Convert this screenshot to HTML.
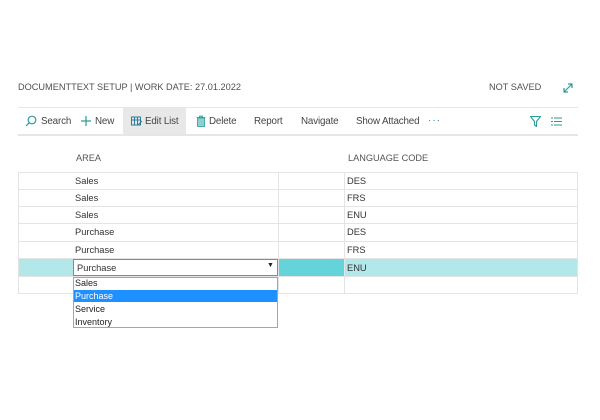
<!DOCTYPE html>
<html><head><style>
*{margin:0;padding:0;box-sizing:border-box}
body{width:600px;height:420px;background:#fff;font-family:"Liberation Sans",sans-serif;position:relative;overflow:hidden;color:#333}
.a{position:absolute;white-space:nowrap}
.t{font-size:9.8px;color:#444;letter-spacing:-0.15px}
.hl{position:absolute;height:1px;background:#e4e4e4}
.vl{position:absolute;width:1px;background:#e4e4e4}
.c{font-size:9.3px;color:#333}
</style></head><body>
<div class="a" style="left:18px;top:82px;font-size:9.2px;color:#505050">DOCUMENTTEXT SETUP | WORK DATE: 27.01.2022</div>
<div class="a" style="left:489px;top:82px;font-size:9.2px;color:#505050">NOT SAVED</div>
<svg class="a" style="left:562px;top:82px" width="12" height="12" viewBox="0 0 12 12" fill="none" stroke="#2a9d9a" stroke-width="1.2"><path d="M2 10L10 2M6 2h4v4M2 6v4h4"/></svg>
<div class="hl" style="left:18px;width:560px;top:107px;background:#e6e6e6"></div>
<div class="hl" style="left:18px;width:560px;top:134px;height:2px;background:#e6e6e6"></div>
<div class="a" style="left:123px;top:108px;width:63px;height:26px;background:#e8e8e8"></div>
<svg class="a" style="left:25px;top:115px" width="12" height="12" viewBox="0 0 12 12" fill="none" stroke="#2a9d9a" stroke-width="1.2"><circle cx="7" cy="5" r="3.8"/><path d="M4.3 7.7L1 11"/></svg>
<div class="a t" style="left:41px;top:116px">Search</div>
<svg class="a" style="left:80px;top:115px" width="12" height="12" viewBox="0 0 12 12" stroke="#2a9d9a" stroke-width="1.2"><path d="M6 1v10M1 6h10"/></svg>
<div class="a t" style="left:95px;top:116px">New</div>
<svg class="a" style="left:131px;top:116px" width="12" height="11" viewBox="0 0 12 11" fill="none" stroke="#2a7d9a" stroke-width="1"><rect x="0.5" y="1" width="9" height="8"/><path d="M0.5 4h9M3.5 1v8M6.5 1v8M7 9l4-4"/></svg>
<div class="a t" style="left:145px;top:116px">Edit List</div>
<svg class="a" style="left:196px;top:115px" width="10" height="12" viewBox="0 0 10 12" fill="#8fd0cf" stroke="#2a9d9a" stroke-width="0.8"><rect x="1.5" y="3" width="7" height="8.5"/><path d="M0.5 2.5h9M3.5 2.5V1h3v1.5"/></svg>
<div class="a t" style="left:209px;top:116px">Delete</div>
<div class="a t" style="left:254px;top:116px">Report</div>
<div class="a t" style="left:301px;top:116px">Navigate</div>
<div class="a t" style="left:356px;top:116px">Show Attached</div>
<div class="a" style="left:428px;top:115px;font-size:10px;color:#2a7d9a;letter-spacing:1px">···</div>
<svg class="a" style="left:530px;top:116px" width="11" height="11" viewBox="0 0 11 11" fill="none" stroke="#2a9d9a" stroke-width="1.1"><path d="M0.5 0.5h10L6.5 5.5v5l-2-1.5V5.5z"/></svg>
<svg class="a" style="left:551px;top:117px" width="11" height="9" viewBox="0 0 11 9" stroke="#2a9d9a" stroke-width="1"><path d="M0 1h2M3 1h8M0 4.5h2M3 4.5h8M0 8h2M3 8h8"/></svg>
<div class="a" style="left:76px;top:153px;font-size:9.2px;color:#555">AREA</div>
<div class="a" style="left:348px;top:153px;font-size:9.2px;color:#555">LANGUAGE CODE</div>
<div class="a" style="left:18px;top:259px;width:560px;height:17px;background:#b3e8ea"></div>
<div class="a" style="left:278px;top:259px;width:66px;height:17px;background:#64d4da"></div>
<div class="hl" style="left:18px;width:560px;top:172px"></div>
<div class="hl" style="left:18px;width:560px;top:189px"></div>
<div class="hl" style="left:18px;width:560px;top:206px"></div>
<div class="hl" style="left:18px;width:560px;top:223px"></div>
<div class="hl" style="left:18px;width:560px;top:241px"></div>
<div class="hl" style="left:18px;width:560px;top:258px"></div>
<div class="hl" style="left:18px;width:560px;top:276px"></div>
<div class="hl" style="left:18px;width:560px;top:293px"></div>
<div class="vl" style="left:18px;top:172px;height:121px"></div>
<div class="vl" style="left:278px;top:172px;height:121px"></div>
<div class="vl" style="left:344px;top:172px;height:121px"></div>
<div class="vl" style="left:577px;top:172px;height:121px"></div>
<div class="a c" style="left:75px;top:176px">Sales</div>
<div class="a c" style="left:75px;top:193px">Sales</div>
<div class="a c" style="left:75px;top:210px">Sales</div>
<div class="a c" style="left:75px;top:227px">Purchase</div>
<div class="a c" style="left:75px;top:245px">Purchase</div>
<div class="a c" style="left:347px;top:176px">DES</div>
<div class="a c" style="left:347px;top:193px">FRS</div>
<div class="a c" style="left:347px;top:210px">ENU</div>
<div class="a c" style="left:347px;top:227px">DES</div>
<div class="a c" style="left:347px;top:245px">FRS</div>
<div class="a c" style="left:347px;top:263px">ENU</div>
<div class="a" style="left:73px;top:259px;width:205px;height:17px;background:#fff;border:1px solid #4aa3a3"></div>
<div class="a c" style="left:77px;top:263px">Purchase</div>
<div class="a" style="left:267px;top:262px;font-size:7px;color:#222">▼</div>
<div class="a" style="left:73px;top:277px;width:205px;height:51px;background:#fff;border:1px solid #8aaad8"></div>
<div class="a" style="left:74px;top:290px;width:203px;height:12px;background:#1e90ff"></div>
<div class="a" style="left:75px;top:278px;font-size:9px;color:#222">Sales</div>
<div class="a" style="left:75px;top:291px;font-size:9px;color:#fff">Purchase</div>
<div class="a" style="left:75px;top:304px;font-size:9px;color:#222">Service</div>
<div class="a" style="left:75px;top:317px;font-size:9px;color:#222">Inventory</div>
</body></html>
